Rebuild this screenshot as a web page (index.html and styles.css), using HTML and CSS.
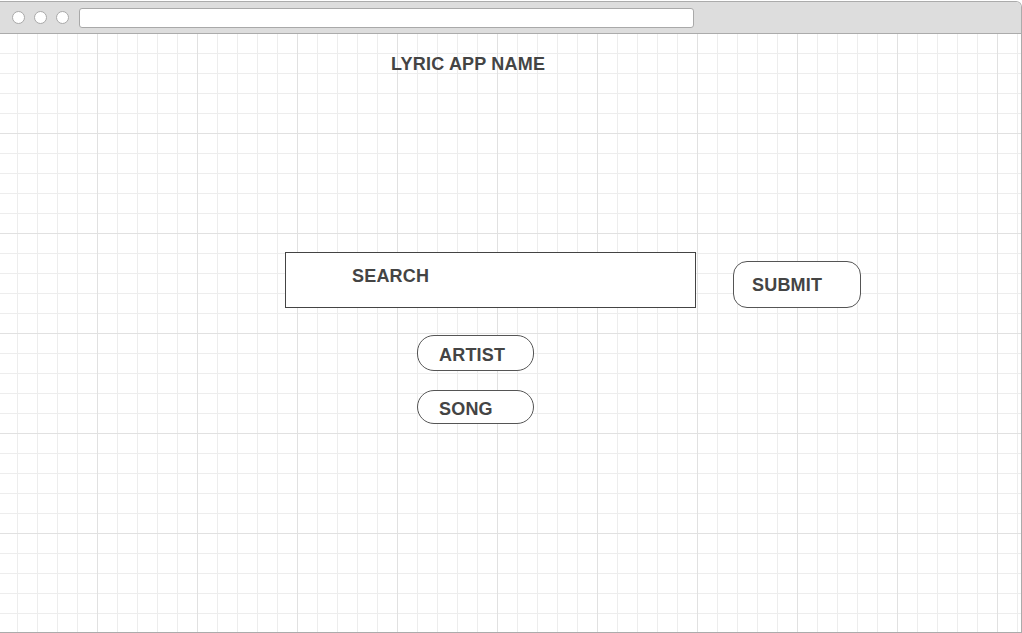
FILE: index.html
```html
<!DOCTYPE html>
<html lang="en">
<head>
<meta charset="utf-8">
<title>Lyric App</title>
<link rel="stylesheet" href="styles.css">
</head>
<body>
<div class="window">
  <div class="chrome">
    <span class="dot"></span>
    <span class="dot"></span>
    <span class="dot"></span>
    <div class="address"></div>
  </div>
  <div class="canvas">
    <div class="stage">
      <h1 class="title">LYRIC APP NAME</h1>
      <div class="search-row">
        <div class="search-box">SEARCH</div>
        <button class="btn submit">SUBMIT</button>
      </div>
      <div class="options">
        <button class="btn pill artist">ARTIST</button>
        <button class="btn pill song">SONG</button>
      </div>
    </div>
  </div>
</div>
</body>
</html>
```

FILE: styles.css
```css
* { box-sizing: border-box; }

html, body {
  margin: 0;
  padding: 0;
  background: #ffffff;
  font-family: "Liberation Sans", Arial, sans-serif;
  color: #444444;
}

.window {
  margin-top: 1px;
  width: 1022px;
  height: 632px;
  border: 1px solid #ababab;
  border-left: none;
  border-top-right-radius: 6px;
  display: flex;
  flex-direction: column;
  overflow: hidden;
}

.chrome {
  height: 32px;
  flex: 0 0 32px;
  background: #dddddd;
  border-bottom: 1px solid #ababab;
  display: flex;
  align-items: center;
  padding-left: 12px;
  gap: 9px;
}

.dot {
  width: 13px;
  height: 13px;
  border-radius: 50%;
  background: #ffffff;
  border: 1px solid #a9a9a9;
  flex: 0 0 13px;
}

.address {
  margin-left: 1px;
  width: 615px;
  height: 20px;
  background: #ffffff;
  border: 1px solid #a9a9a9;
  border-radius: 3px;
}

.canvas {
  flex: 1;
  background-color: #ffffff;
  background-image:
    linear-gradient(to right, #e1e1e1 1px, transparent 1px),
    linear-gradient(to bottom, #e1e1e1 1px, transparent 1px),
    linear-gradient(to right, #ededed 1px, transparent 1px),
    linear-gradient(to bottom, #ededed 1px, transparent 1px);
  background-size: 100px 100%, 100% 100px, 20px 100%, 100% 20px;
  background-position: 97px 0, 0 99px, 17px 0, 0 19px;
}

.stage {
  padding-top: 20px;
  padding-left: 285px;
  display: flex;
  flex-direction: column;
  letter-spacing: 0.2px;
}

.title {
  margin: 0 0 0 106px;
  font-size: 18px;
  line-height: 20px;
  font-weight: bold;
  color: #444444;
}

.search-row {
  margin-top: 178px;
  display: flex;
  align-items: flex-end;
  gap: 37px;
}

.search-box {
  width: 411px;
  height: 56px;
  border: 1px solid #444444;
  background: #ffffff;
  padding: 13px 0 0 66px;
  font-size: 18px;
  line-height: 20px;
  font-weight: bold;
}

.btn {
  font-family: "Liberation Sans", Arial, sans-serif;
  font-size: 18px;
  line-height: 20px;
  font-weight: bold;
  letter-spacing: 0.2px;
  color: #444444;
  background: #ffffff;
  border: 1px solid #555555;
  text-align: left;
  margin: 0;
  cursor: pointer;
  display: block;
}

.submit {
  width: 128px;
  border-radius: 14px;
  padding: 13px 0 12px 18px;
}

.options {
  margin-left: 132px;
  margin-top: 27px;
  display: flex;
  flex-direction: column;
  align-items: flex-start;
  gap: 19px;
}

.pill {
  width: 117px;
  border-radius: 17px;
  padding-left: 21px;
  padding-right: 0;
}

.artist {
  padding-top: 9px;
  padding-bottom: 5px;
}

.song {
  padding-top: 8px;
  padding-bottom: 4px;
}
```
